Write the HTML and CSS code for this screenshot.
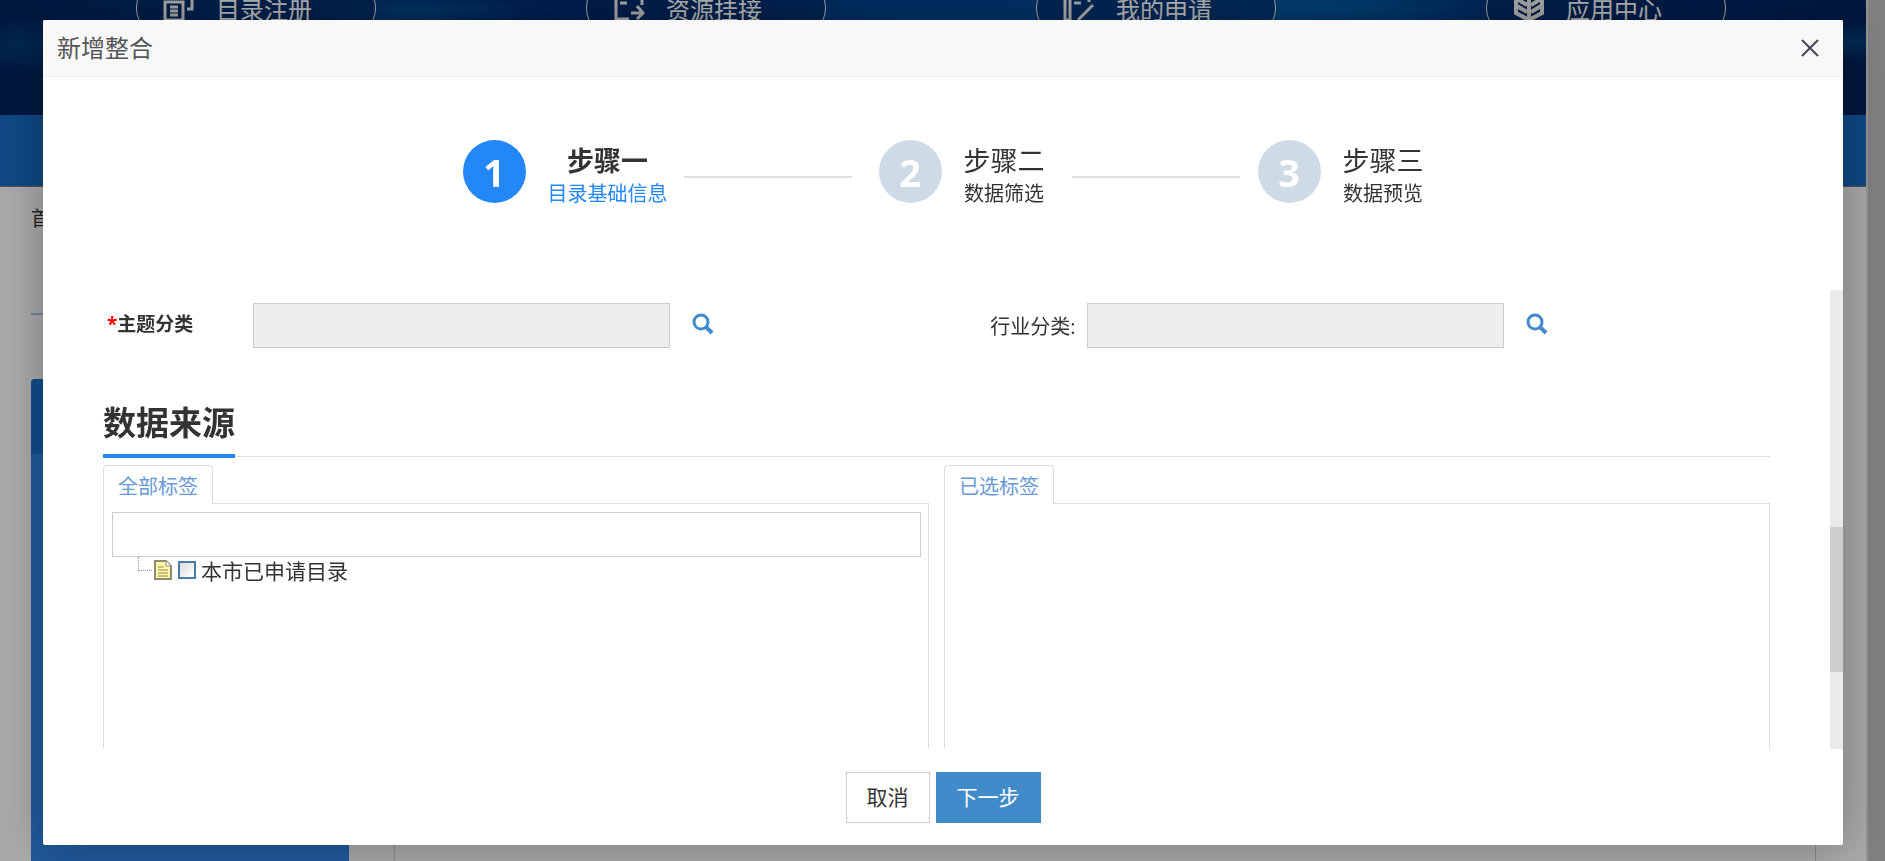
FILE: index.html
```html
<!DOCTYPE html>
<html lang="zh-CN">
<head>
<meta charset="utf-8">
<title>新增整合</title>
<link rel="stylesheet" href="styles.css">
</head>
<body>
<div class="page">
  <header class="banner">
    <nav class="entries">
      <a class="entry" href="#"><svg class="entry-icon" viewBox="0 0 32 32"><path d="M2 10h18v18H2zM7 15h8M7 19h8M7 23h8M9 5V2h20v15h-5" /></svg>目录注册</a>
      <a class="entry" href="#"><svg class="entry-icon" viewBox="0 0 32 32"><path d="M29 13V3H3v24h13M7 11h7M18 21h12M24 14l6 7-6 6" /></svg>资源挂接</a>
      <a class="entry" href="#"><svg class="entry-icon" viewBox="0 0 32 32"><path d="M2 2h5v26H2zM11 11h7M30 13L15 28M12 3h14v7" /></svg>我的申请</a>
      <a class="entry" href="#"><svg class="entry-icon heavy" viewBox="0 0 32 32"><path d="M3 2v19l13 7 13-7V2M16 6v22M4 7l10 6M4 14l10 6M28 7l-10 6M28 14l-10 6" /></svg>应用中心</a>
    </nav>
  </header>
  <div class="bluebar"></div>
  <div class="crumbs">首页</div>
  <div class="columns">
    <aside class="side"><div class="side-head"></div></aside>
    <section class="main"></section>
  </div>
</div>

<div class="overlay">
  <section class="dialog" role="dialog" aria-labelledby="dialog-title">
    <header class="dialog-head">
      <h1 class="dialog-title" id="dialog-title">新增整合</h1>
      <button class="close" type="button" aria-label="关闭"><svg viewBox="0 0 18 18"><path d="M1 1l16 16M17 1L1 17" /></svg></button>
    </header>

    <ol class="steps">
      <li class="step current"><span class="num">1</span><span class="step-text"><b class="step-name">步骤一</b><span class="step-sub">目录基础信息</span></span></li>
      <li class="line"></li>
      <li class="step"><span class="num">2</span><span class="step-text"><b class="step-name">步骤二</b><span class="step-sub">数据筛选</span></span></li>
      <li class="line"></li>
      <li class="step"><span class="num">3</span><span class="step-text"><b class="step-name">步骤三</b><span class="step-sub">数据预览</span></span></li>
    </ol>

    <div class="scroll">
      <form class="form">
        <div class="fields">
          <div class="field">
            <label class="label required" for="topic"><span class="star">*</span>主题分类</label>
            <input class="input" id="topic" type="text" readonly>
            <button class="search" type="button" aria-label="选择主题分类"><svg viewBox="0 0 22 22"><circle cx="9" cy="9" r="7" /><path d="M14 14l6 6" /></svg></button>
          </div>
          <div class="field">
            <label class="label right" for="industry">行业分类:</label>
            <input class="input" id="industry" type="text" readonly>
            <button class="search" type="button" aria-label="选择行业分类"><svg viewBox="0 0 22 22"><circle cx="9" cy="9" r="7" /><path d="M14 14l6 6" /></svg></button>
          </div>
        </div>

        <div class="section-head"><h2 class="section-title">数据来源</h2></div>

        <div class="panels">
          <section class="panel">
            <a class="tab" href="#">全部标签</a>
            <div class="panel-body">
              <input class="filter" type="text" aria-label="筛选标签">
              <div class="tree">
                <span class="branch"></span>
                <svg class="doc" viewBox="0 0 18 20"><path class="sheet" d="M1 1h11l5 5v13H1z" /><path class="fold" d="M12 1v5h5" /><path class="rows" d="M4 7h6M4 10h10M4 13h10M4 16h10" /></svg>
                <input class="check" id="node" type="checkbox">
                <label class="node" for="node">本市已申请目录</label>
              </div>
            </div>
          </section>
          <section class="panel">
            <a class="tab" href="#">已选标签</a>
            <div class="panel-body"></div>
          </section>
        </div>
      </form>
      <div class="track"><div class="thumb"></div></div>
    </div>

    <footer class="actions">
      <button class="btn" type="button">取消</button>
      <button class="btn primary" type="button">下一步</button>
    </footer>
  </section>
</div>
</body>
</html>
```
FILE: styles.css
```css
* { box-sizing: border-box; }

body {
  margin: 0;
  height: 100vh;
  overflow: hidden;
  background: #b8b8b8;
  color: #333;
  font-family: "Open Sans", "Noto Sans CJK SC", sans-serif;
  font-size: 20px;
}

h1, h2, ol { margin: 0; padding: 0; }
a { text-decoration: none; }
svg { display: block; fill: none; }
button, input { font: inherit; border-radius: 0; }

/* page behind the dialog */
.page {
  display: flex;
  flex-direction: column;
  height: 100vh;
  margin-right: 17px;
  border-right: 2px solid #d5d5d5;
  background: #f3f3f3;
}
.banner {
  height: 115px;
  padding: 0 35px 0 31px;
  overflow: hidden;
  background:
    radial-gradient(60px 30px at 20px 45px, #00508a80, transparent),
    radial-gradient(120px 14px at 420px 10px, #0068a880, transparent),
    radial-gradient(160px 20px at 1330px 8px, #0070b480, transparent),
    radial-gradient(60px 20px at 1855px 42px, #00609880, transparent),
    linear-gradient(90deg, #002058 0%, #003878 14%, #002a70 30%, #004490 48%, #004a94 68%, #003278 82%, #002868 92%, #002058 100%);
}
.entries {
  display: flex;
  margin-top: -22px;
}
.entry {
  display: flex;
  align-items: center;
  width: 240px;
  height: 60px;
  margin: 0 auto;
  padding-left: 26px;
  gap: 21px;
  border: 1px solid #eee;
  border-radius: 30px;
  background: #00266080;
  color: #fff;
  font-size: 24px;
}
.entry-icon {
  width: 32px;
  height: 32px;
  stroke: #eee;
  stroke-width: 3;
}
.entry-icon.heavy { stroke-width: 4; }
.bluebar {
  height: 72px;
  background: #1668bd;
  border-bottom: 1px solid #777;
}
.crumbs {
  margin: 0 31px;
  height: 128px;
  padding-top: 16px;
  border-bottom: 2px solid #a3bcdf;
}
.columns {
  display: flex;
  flex: 1;
  gap: 45px;
  margin: 64px 50px 0 31px;
}
.side {
  width: 318px;
  border-radius: 4px 4px 0 0;
  background: #2f80df;
  overflow: hidden;
}
.side-head { height: 75px; background: #1a6cc8; }
.main { flex: 1; border: solid #c8c8c8; border-width: 0 1px; }

/* dialog */
.overlay {
  position: fixed;
  inset: 0;
  padding: 20px 42px 16px 43px;
  background: rgba(0, 0, 0, 0.3);
}
.dialog {
  display: flex;
  flex-direction: column;
  height: 100%;
  border-radius: 2px;
  background: #fff;
  box-shadow: 1px 1px 50px rgba(0, 0, 0, 0.3);
}
.dialog-head {
  display: flex;
  align-items: center;
  justify-content: space-between;
  height: 57px;
  padding: 0 24px 0 14px;
  border-bottom: 1px solid #eee;
  border-radius: 2px 2px 0 0;
  background: #f8f8f8;
}
.dialog-title {
  color: #555;
  font-size: 24px;
  font-weight: 400;
  line-height: 32px;
}
.close {
  width: 18px;
  height: 18px;
  padding: 0;
  border: 0;
  background: none;
}
.close svg { stroke: #445; stroke-width: 2; }

.steps {
  display: flex;
  justify-content: center;
  height: 213px;
  padding-top: 63px;
  list-style: none;
}
.step { display: flex; gap: 22px; }
.num {
  display: flex;
  align-items: center;
  justify-content: center;
  width: 63px;
  height: 63px;
  border-radius: 50%;
  background: #cedae6;
  color: #fff;
  font-size: 38px;
  font-weight: 700;
}
.step-text {
  display: flex;
  flex-direction: column;
  align-items: center;
  padding-top: 5px;
}
.step-name { font-size: 27px; font-weight: 400; line-height: 32px; }
.step-sub { line-height: 34px; }
.current .num { background: #2487f7; }
.current .step-name { font-weight: 700; }
.current .step-sub { color: #2487f7; }
.line {
  width: 168px;
  height: 2px;
  margin: 36px 18px 0 27px;
  background: #e0e0e0;
}
.current + .line { margin: 36px 27px 0 16px; }

.scroll {
  display: flex;
  flex: 1;
  min-height: 0;
  overflow: hidden;
}
.form {
  display: flex;
  flex: 1;
  flex-direction: column;
  padding: 13px 60px 0;
}
.fields { display: grid; grid-template-columns: 1fr 1fr; }
.field { display: flex; align-items: center; height: 45px; }
.label { width: 150px; }
.label.required { padding: 0 0 6px 4px; font-size: 19px; font-weight: 700; }
.label.right { padding-right: 11px; text-align: right; }
.star { color: #f00; }
.input {
  width: 417px;
  height: 45px;
  border: 1px solid #ccc;
  background: #eee;
}
.search {
  width: 22px;
  height: 22px;
  margin: 0 0 4px 22px;
  padding: 0;
  border: 0;
  background: none;
}
.search svg { stroke: #428bca; stroke-width: 3; }
.search path { stroke-width: 4; }

.section-head {
  display: flex;
  height: 61px;
  margin-top: 48px;
  padding-bottom: 1px;
  background: linear-gradient(#ddd, #ddd) 0 60px / 100% 1px no-repeat;
}
.section-title {
  height: 62px;
  border-bottom: 4px solid #2487f7;
  font-size: 33px;
  line-height: 54px;
}
.panels {
  display: grid;
  flex: 1;
  grid-template-columns: 1fr 1fr;
  gap: 15px;
  margin-top: 8px;
}
.panel { display: flex; flex-direction: column; align-items: flex-start; }
.tab {
  position: relative;
  height: 39px;
  margin-bottom: -1px;
  padding: 0 14px;
  border: 1px solid #ddd;
  border-bottom: 0;
  border-radius: 4px 4px 0 0;
  background: #fff;
  color: #6899d4;
  line-height: 42px;
}
.panel-body {
  flex: 1;
  align-self: stretch;
  padding: 8px 7px 8px 8px;
  border: 1px solid #ddd;
  border-bottom: 0;
}
.filter {
  display: block;
  width: 100%;
  height: 45px;
  border: 1px solid #ccc;
  background: #fff;
}
.tree {
  display: flex;
  align-items: center;
  height: 26px;
  padding-left: 26px;
  font-size: 21px;
}
.branch {
  align-self: flex-start;
  width: 14px;
  height: 14px;
  margin-right: 2px;
  border: dotted #999;
  border-width: 0 0 1px 1px;
}
.doc { width: 18px; height: 20px; }
.sheet { fill: #fdf7a5; stroke: #8f8a75; stroke-width: 2; }
.fold { fill: #fff; stroke: #8f8a75; stroke-width: 1; }
.rows { stroke: #8f8a55; stroke-width: 1; }
.check {
  appearance: none;
  width: 18px;
  height: 18px;
  margin: 0 5px 0 6px;
  border: 2px solid #4a7ba6;
  background: linear-gradient(135deg, #ddd, #fff);
}
.track { width: 13px; padding-top: 237px; background: #eaeaea; }
.thumb { height: 145px; background: #cecece; }

.actions {
  display: flex;
  justify-content: center;
  gap: 6px;
  height: 96px;
  padding-top: 23px;
}
.btn {
  height: 51px;
  padding: 0 20px 3px;
  border: 1px solid #ccc;
  background: #fff;
  color: #333;
  font-size: 21px;
}
.btn.primary { border-color: #428bca; background: #428bca; color: #fff; }
```
